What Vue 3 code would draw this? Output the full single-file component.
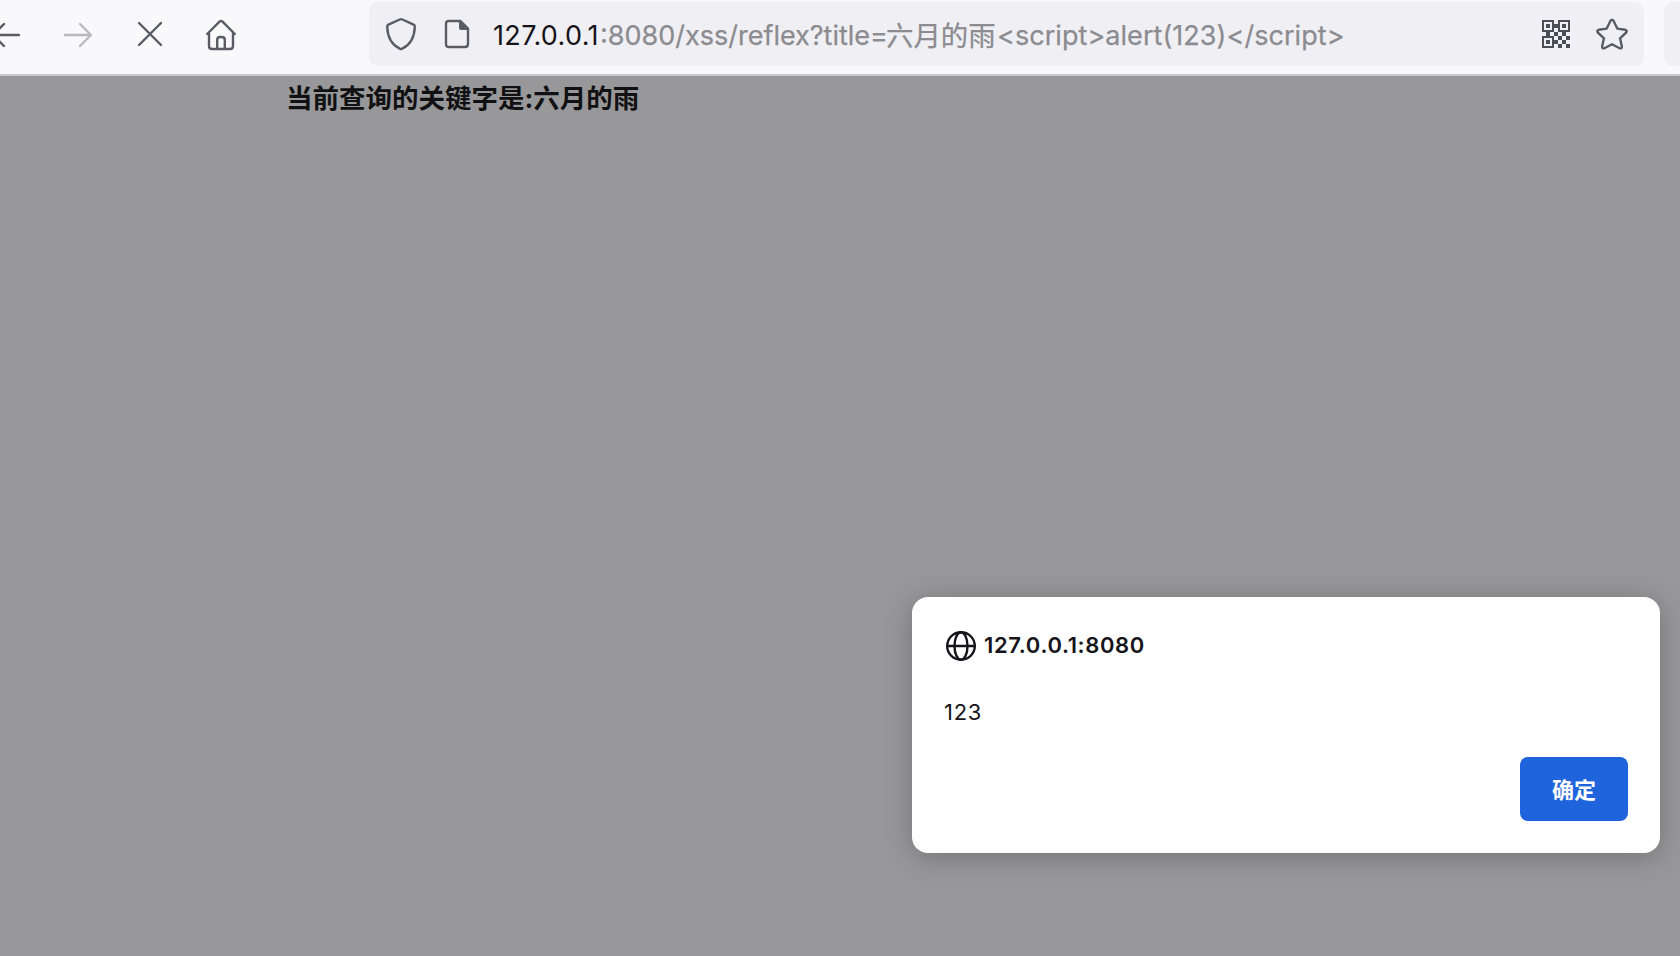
<script setup>
const finders = [
  [0, 0], [16, 0], [0, 16],
]
const cells = [
  [12, 4], [4, 12], [20, 12], [12, 12], [16, 16], [24, 16], [12, 20], [20, 20], [16, 24], [24, 24],
]
</script>

<template>
  <div class="window">
    <header class="toolbar">
      <nav class="nav">
        <svg class="back" width="30" height="30" viewBox="0 0 30 30"><path d="M29 15H2M14 4 3 15l11 11" /></svg>
        <svg class="forward" width="30" height="30" viewBox="0 0 30 30"><path d="M2 15h25M17 4l11 11-11 11" /></svg>
        <svg class="stop" width="26" height="26" viewBox="0 0 26 26"><path d="m2 2 22 22M24 2 2 24" /></svg>
        <svg class="home" width="32" height="32" viewBox="0 0 32 32">
          <path d="M2.2 15 14.5 2.6q1.5-1.3 3 0L29.800 15M4 13.500V27q0 3 3 3h18q3 0 3-3V13.500M12.200 29.500V21q0-3 3-3h1.600q3 0 3 3v8.500" />
        </svg>
      </nav>
      <div class="urlbar">
        <svg class="shield" width="32" height="34" viewBox="0 0 32 34">
          <path d="M14.700 2.500q1.300-.7 2.600 0L28.600 7.600q1.300.7 1.200 2.200c-.3 9.500-3.600 17.500-12.500 21.900q-1.300.7-2.600 0C5.800 27.300 2.500 19.300 2.200 9.800Q2.100 8.300 3.400 7.600z" />
        </svg>
        <svg class="page" width="26" height="30" viewBox="0 0 26 30">
          <path d="M5 2h11.500L24 9.500V25q0 3-3 3H5q-3 0-3-3V5q0-3 3-3z" /><path class="fill" d="M15 1.500V9q0 2 2 2h7.500v-1.500L16.500 1.500z" />
        </svg>
        <div class="url"><span class="host">127.0.0.1</span><span class="path">:8080/xss/reflex?title=</span><span class="han">六月的雨</span><span class="query">&lt;script&gt;alert(123)&lt;/script&gt;</span></div>
        <svg class="qr" width="28" height="28" viewBox="0 0 28 28" shape-rendering="crispEdges">
          <g v-for="([x, y], i) in finders" :key="i" :transform="`translate(${x} ${y})`">
            <path fill-rule="evenodd" d="M0 0h12v12H0zM2 2v8h8V2zM4 4h4v4H4z" />
          </g>
          <rect v-for="([x, y], i) in cells" :key="'c' + i" :x="x" :y="y" width="4" height="4" />
        </svg>
        <svg class="star" width="32" height="32" viewBox="0 0 32 32">
          <path d="M14.500 2.700q1.500-2.200 3 0l3.800 7.900 8 1.200q2.300.7.900 2.700L24 20.300l1.900 8.300q0 2.300-2.300 1.700L16 26.300l-7.600 4q-2.300.6-2.300-1.700L8 20.300l-6.200-5.800q-1.400-2 .9-2.700l8-1.200z" />
        </svg>
      </div>
      <div class="next"></div>
    </header>
    <main class="content">
      <h1>当前查询的关键字是:六月的雨</h1>
      <section class="dialog">
        <div class="title">
          <svg width="30" height="30" viewBox="0 0 30 30"><circle cx="15" cy="15" r="13.800" /><ellipse cx="15" cy="15" rx="6.500" ry="13.800" /><path d="M1.500 15h27" /></svg>
          <strong>127.0.0.1:8080</strong>
        </div>
        <p>123</p>
        <button>确定</button>
      </section>
    </main>
  </div>
</template>

<style>
body { margin: 0; overflow: hidden; }
</style>

<style scoped>
.window { width: 1680px; height: 956px; display: flex; flex-direction: column; overflow: hidden; background: #98989a; font-family: Inter, "Noto Sans CJK SC", sans-serif; }
.toolbar { box-sizing: border-box; height: 76px; flex: none; display: flex; padding-top: 2px; background: #f9f9fb; border-bottom: 2px solid #cacacc; }
.nav { width: 369px; flex: none; display: flex; align-items: flex-start; }
svg { display: block; flex: none; fill: none; stroke: #5b5b66; stroke-width: 2.4; stroke-linecap: round; stroke-linejoin: round; }
.back { margin: 18px 0 0 -10px; }
.forward { margin: 18px 0 0 43px; opacity: .4; }
.stop { margin: 19px 0 0 44px; }
.home { margin: 17px 0 0 42px; }
.urlbar { box-sizing: border-box; width: 1275px; height: 64px; flex: none; display: flex; align-items: flex-start; background: #f0f0f4; border-radius: 9px; padding-left: 16px; }
.shield { margin-top: 15px; }
.page { margin: 17px 0 0 27px; }
.page .fill { fill: #5b5b66; stroke: none; }
.url { width: 1049px; margin-left: 23px; flex: none; display: flex; font-size: 27px; line-height: 68px; height: 64px; white-space: nowrap; color: #8b8b90; -webkit-text-stroke: .25px currentColor; }
.host { color: #15141a; width: 107px; letter-spacing: .35px; -webkit-text-stroke-width: 0; }
.path { width: 286px; }
.han { width: 111px; font-size: 27.400px; }
.query { letter-spacing: .05px; }
.qr { margin-top: 18px; fill: #4d4d55; stroke: none; }
.star { margin: 16px 0 0 26px; }
.next { width: 40px; height: 64px; flex: none; margin-left: 20px; border-radius: 9px; background: #f0f0f4; }
.content { flex: 1; display: flex; flex-direction: column; }
h1 { margin: 3px 0 0 286px; font-size: 26.500px; line-height: 38px; font-weight: 700; color: #111113; white-space: nowrap; }
.dialog { box-sizing: border-box; width: 748px; height: 256px; margin: 480px 0 0 912px; padding: 32px; border-radius: 16px; background: #fff; box-shadow: 0 4px 28px rgba(0, 0, 0, .25); color: #15141a; display: flex; flex-direction: column; }
.title { display: flex; align-items: center; height: 34px; padding-left: 2px; gap: 8px; }
.title svg { stroke: #15141a; }
.title strong { font-size: 22px; font-weight: 600; line-height: 32px; padding-bottom: 2px; letter-spacing: .63px; }
p { margin: 33px 0 0; font-size: 22px; line-height: 32px; letter-spacing: .7px; }
button { width: 108px; height: 64px; margin: 29px 0 0; align-self: flex-end; flex: none; border: 0; padding: 0 0 2px; border-radius: 8px; background: #1f64dc; color: #fff; font: 700 22px "Noto Sans CJK SC", sans-serif; }
</style>
